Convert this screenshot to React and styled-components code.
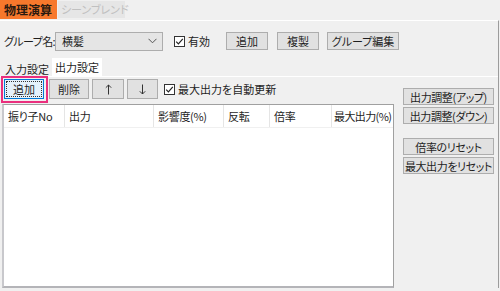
import styled, { createGlobalStyle } from 'styled-components';

const GlobalStyle = createGlobalStyle`
    html, body {
        margin: 0;
        padding: 0;
        background: #f0f0f0;
    }
    body {
        font-family: 'Noto Sans CJK JP', 'Noto Sans', sans-serif;
        font-size: 11px;
        font-feature-settings: 'palt';
        color: #1e1e1e;
    }
`;

const Window = styled.div`
    width: 500px;
    height: 291px;
    background: #f0f0f0;
    overflow: hidden;
    display: flex;
    flex-direction: column;
`;

const TopTabs = styled.div`
    height: 20px;
    display: flex;
    align-items: flex-start;
`;

const TopTab = styled.div`
    width: ${(p) => (p.active ? '57px' : '67px')};
    height: ${(p) => (p.active ? '19px' : '17px')};
    margin-top: ${(p) => (p.active ? '0' : '1px')};
    margin-left: ${(p) => (p.active ? '0' : '1px')};
    box-sizing: border-box;
    padding-left: ${(p) => (p.active ? '4px' : '3px')};
    background: ${(p) => (p.active ? '#f7782c' : '#e6e6e6')};
    color: ${(p) => (p.active ? '#2a1a10' : '#c0c0c0')};
    font-size: ${(p) => (p.active ? '12px' : '11px')};
    font-weight: ${(p) => (p.active ? 700 : 400)};
    display: flex;
    align-items: center;
    white-space: nowrap;
    line-height: 1;
`;

const Panel = styled.div`
    width: 498px;
    height: 267px;
    border-top: 1px solid #ffffff;
    border-right: 1px solid #9c9c9c;
    display: flex;
    flex-direction: column;
`;

const GroupRow = styled.div`
    height: 20px;
    margin-top: 10px;
    padding-left: 4px;
    display: flex;
    align-items: center;
`;

const Label = styled.span`
    width: 51px;
    flex-shrink: 0;
    display: flex;
    justify-content: space-between;
    padding-right: 3px;
    box-sizing: border-box;
    white-space: nowrap;
    letter-spacing: -0.6px;
`;

const Combo = styled.div`
    width: 108px;
    height: 19px;
    flex-shrink: 0;
    background: #e5e5e5;
    border: 1px solid #adadad;
    display: flex;
    align-items: center;
    justify-content: space-between;
    padding: 0 5px 0 6px;
    box-sizing: border-box;
`;

const CheckWrap = styled.label`
    display: flex;
    align-items: center;
    gap: 3px;
    margin-left: ${(p) => p.gap || 0}px;
    white-space: nowrap;
`;

const Box = styled.span`
    width: 11px;
    height: 11px;
    border: 1px solid #333;
    background: #fff;
    box-sizing: border-box;
    display: flex;
    align-items: center;
    justify-content: center;
`;

const Button = styled.div`
    width: ${(p) => p.w}px;
    height: ${(p) => p.h || 18}px;
    margin-left: ${(p) => p.ml || 0}px;
    flex-shrink: 0;
    box-sizing: border-box;
    background: ${(p) => (p.focused ? '#e5f1fb' : '#e1e1e1')};
    border: 1px solid ${(p) => (p.focused ? '#0078d7' : '#adadad')};
    outline: ${(p) => (p.focused ? '1px dotted #333' : 'none')};
    outline-offset: -3px;
    display: flex;
    align-items: center;
    justify-content: center;
    white-space: nowrap;
    font-size: 11px;
    letter-spacing: ${(p) => (p.tight ? '-0.4px' : '0')};
    color: #1e1e1e;
`;

const SubTabs = styled.div`
    height: 18px;
    margin-top: 7px;
    display: flex;
    align-items: flex-end;
`;

const SubTab = styled.div`
    height: ${(p) => (p.active ? '18px' : '14px')};
    padding: 0 ${(p) => (p.active ? '3px' : '2px')};
    margin-left: ${(p) => (p.active ? '1px' : '3px')};
    background: ${(p) => (p.active ? '#ffffff' : 'transparent')};
    display: flex;
    align-items: center;
    white-space: nowrap;
`;

const TabBody = styled.div`
    flex: 1;
    border-top: 1px solid #ffffff;
    display: flex;
`;

const LeftCol = styled.div`
    width: 395px;
    display: flex;
    flex-direction: column;
`;

const Toolbar = styled.div`
    position: relative;
    height: 20px;
    margin-top: 2px;
    padding-left: 4px;
    display: flex;
    align-items: center;
`;

const Highlight = styled.div`
    position: absolute;
    left: 1px;
    top: -3px;
    width: 47px;
    height: 27px;
    border: 2px solid #ea2f7e;
    box-sizing: border-box;
    pointer-events: none;
`;

const Table = styled.div`
    margin: 5px 0 0 2px;
    width: 392px;
    height: 184px;
    background: #fff;
    border: 1px solid #a0a0a0;
    border-left: 2px solid #c8c8cc;
    border-bottom: 2px solid #b4b4b8;
    box-sizing: border-box;
`;

const HeaderRow = styled.div`
    height: 22px;
    display: flex;
    border-bottom: 1px solid #f0f0f0;
`;

const HeadCell = styled.div`
    width: ${(p) => p.w}px;
    flex: ${(p) => (p.last ? '1' : 'none')};
    padding-left: ${(p) => (p.last ? '2px' : '4px')};
    box-sizing: border-box;
    border-right: ${(p) => (p.last ? 'none' : '1px solid #e5e5e5')};
    display: flex;
    align-items: center;
    white-space: nowrap;
    letter-spacing: ${(p) => (p.last ? '-0.6px' : '-0.3px')};
    overflow: hidden;
`;

const RightCol = styled.div`
    margin-left: 8px;
    padding-top: 11px;
    display: flex;
    flex-direction: column;
    gap: 2px;
`;

const Spacer = styled.div`
    height: 10px;
`;

const Check = () => (
    <Box>
        <svg width="9" height="9" viewBox="0 0 9 9">
            <path d="M1.2 4.6 L3.4 6.8 L7.8 1.8" fill="none" stroke="#222" strokeWidth="1.2" />
        </svg>
    </Box>
);

const Chevron = () => (
    <svg width="9" height="6" viewBox="0 0 9 6">
        <path d="M0.5 0.8 L4.5 4.8 L8.5 0.8" fill="none" stroke="#555" strokeWidth="1" />
    </svg>
);

const Arrow = ({ down }) => (
    <svg width="7" height="11" viewBox="0 0 7 11">
        <path
            d={down ? 'M3.5 0.5 V10 M0.8 7.3 L3.5 10 L6.2 7.3' : 'M3.5 10.5 V1 M0.8 3.7 L3.5 1 L6.2 3.7'}
            fill="none"
            stroke="#333"
            strokeWidth="1"
        />
    </svg>
);

const columns = [
    { name: '振り子No', w: 61 },
    { name: '出力', w: 89 },
    { name: '影響度(%)', w: 70 },
    { name: '反転', w: 46 },
    { name: '倍率', w: 62 },
    { name: '最大出力(%)', w: 60 },
];

const App = () => {
    return (
        <Window>
            <GlobalStyle />
            <TopTabs>
                <TopTab active>物理演算</TopTab>
                <TopTab>シーンブレンド</TopTab>
            </TopTabs>
            <Panel>
                <GroupRow>
                    <Label>
                        <span>グループ名</span>
                        <span>:</span>
                    </Label>
                    <Combo>
                        <span>横髪</span>
                        <Chevron />
                    </Combo>
                    <CheckWrap gap={11}>
                        <Check />
                        有効
                    </CheckWrap>
                    <Button w={42} ml={16}>追加</Button>
                    <Button w={42} ml={9}>複製</Button>
                    <Button w={72} ml={8}>グループ編集</Button>
                </GroupRow>
                <SubTabs>
                    <SubTab>入力設定</SubTab>
                    <SubTab active>出力設定</SubTab>
                </SubTabs>
                <TabBody>
                    <LeftCol>
                        <Toolbar>
                            <Button w={40} h={20} focused>追加</Button>
                            <Button w={40} h={20} ml={5}>削除</Button>
                            <Button w={32} h={20} ml={3}><Arrow /></Button>
                            <Button w={31} h={20} ml={3}><Arrow down /></Button>
                            <CheckWrap gap={6}>
                                <Check />
                                最大出力を自動更新
                            </CheckWrap>
                            <Highlight />
                        </Toolbar>
                        <Table>
                            <HeaderRow>
                                {columns.map((c, i) => (
                                    <HeadCell key={c.name} w={c.w} last={i === columns.length - 1}>
                                        {c.name}
                                    </HeadCell>
                                ))}
                            </HeaderRow>
                        </Table>
                    </LeftCol>
                    <RightCol>
                        <Button w={91} h={17} tight>出力調整(アップ)</Button>
                        <Button w={91} h={17} tight>出力調整(ダウン)</Button>
                        <Spacer />
                        <Button w={91} h={17} tight>倍率のリセット</Button>
                        <Button w={91} h={17} tight>最大出力をリセット</Button>
                    </RightCol>
                </TabBody>
            </Panel>
        </Window>
    );
};

export default App;
